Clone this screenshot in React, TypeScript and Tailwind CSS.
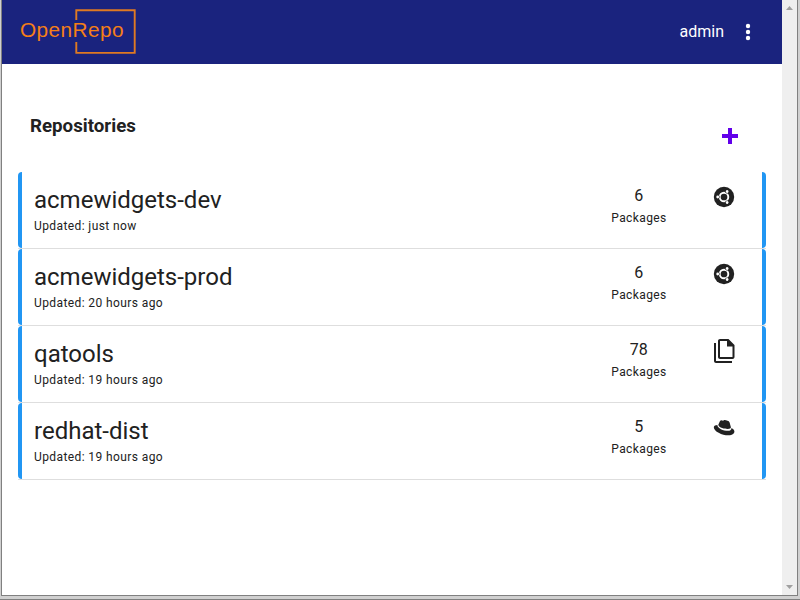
import React from "react";

type Kind = "deb" | "files" | "rpm";

const repos: { name: string; updated: string; count: number; kind: Kind }[] = [
  { name: "acmewidgets-dev", updated: "just now", count: 6, kind: "deb" },
  { name: "acmewidgets-prod", updated: "20 hours ago", count: 6, kind: "deb" },
  { name: "qatools", updated: "19 hours ago", count: 78, kind: "files" },
  { name: "redhat-dist", updated: "19 hours ago", count: 5, kind: "rpm" },
];

function Logo() {
  return (
    <svg width="118" height="46" viewBox="0 0 118 46" className="block">
      <path d="M57.300 12V2.300H115.700V44.900H57.300V34" fill="none" stroke="#e07a22" strokeWidth="1.900" />
      <text x="1" y="29" fontSize="20.800" textLength="103.500" fill="#f57f17" fontFamily="Liberation Sans, Arial, sans-serif">
        OpenRepo
      </text>
    </svg>
  );
}

function RepoIcon({ kind }: { kind: Kind }) {
  if (kind === "deb")
    return (
      <svg width="24" height="24" viewBox="0 0 24 24">
        <circle cx="12" cy="12" r="10.200" fill="currentColor" />
        <circle cx="12" cy="12" r="4.300" fill="none" stroke="#fff" strokeWidth="1.900" />
        {[60, 180, 300].map((angle) => (
          <g key={angle} transform={`rotate(${angle} 12 12)`}>
            <circle cx="18.200" cy="12" r="1.900" fill="currentColor" />
            <circle cx="18.300" cy="12" r="1.400" fill="#fff" />
          </g>
        ))}
      </svg>
    );
  if (kind === "files")
    return (
      <svg width="24" height="24" viewBox="0 0 24 24" fill="currentColor">
        <path d="M16 0H8C6.900 0 6 .9 6 2v16c0 1.100.9 2 2 2h12.500c1.100 0 2-.9 2-2V6l-6-6m4 18H8V2h7v5h5.500v11M4 4H2v18c0 1.100.9 2 2 2h16v-2H4V4z" />
        <path d="M15 1l6.500 6.500H15z" />
      </svg>
    );
  return (
    <svg width="24" height="24" viewBox="0 0 24 24" fill="currentColor">
      <path d="M15.800 13c1.800 0 3.200-.4 3.100-1.700L17.600 6.500c-.3-1.100-.8-1.500-2.700-2.100-1.200-.5-2.400-.7-3-.2l-.9.500c-.9-.4-2.200-.9-3 .3L6.300 8.800C6.500 11.200 11.400 13 15.800 13z" />
      <path d="M5.300 8.900C3.800 9 1.800 9.500 1.800 11.200c0 4.200 8.300 8.100 14.500 8.100 4.500 0 6.100-2 6.100-3.800 0-1.300-1.200-2.700-2.900-3.500-.1 2-1.500 2.800-3.500 2.800C11.200 14.800 5.500 12.200 5.300 8.900z" />
    </svg>
  );
}

export default function App() {
  return (
    <div className="flex h-[600px] w-[800px] flex-col overflow-hidden border-b border-[#808080] bg-[#d0d0d0] pb-[3px] pl-px pr-[2px] font-[Roboto,sans-serif] text-[#212121]">
      <div className="flex min-h-0 flex-1 border-x border-b border-[#808080] bg-white">
        <main className="flex min-w-0 flex-1 flex-col">
          <header className="flex h-16 items-start justify-between bg-[#1a237e] pl-[17px] pr-[22px] pt-2">
            <Logo />
            <div className="flex h-12 items-center text-white">
              <span className="mr-3 text-base">admin</span>
              <svg width="24" height="24" viewBox="0 0 24 24" fill="currentColor">
                <circle cx="12" cy="6" r="2.200" />
                <circle cx="12" cy="12" r="2.200" />
                <circle cx="12" cy="18" r="2.200" />
              </svg>
            </div>
          </header>
          <div className="flex h-[108px] items-start justify-between pl-7 pr-10 pt-12">
            <h1 className="text-[18.720px] font-bold leading-7">Repositories</h1>
            <svg width="24" height="24" viewBox="0 0 24 24" className="mt-3" fill="#6200ea">
              <path d="M20 14h-6v6h-4v-6H4v-4h6V4h4v6h6z" />
            </svg>
          </div>
          <section className="px-4">
            {repos.map((r) => (
              <article key={r.name} className="h-[77px] border-b border-[#dedede]">
                <div className="flex h-[76px] rounded-[4px] border-x-4 border-[#2196f3] pl-3 pr-[26px] pt-3">
                  <div className="flex-1">
                    <h2 className="text-2xl leading-8">{r.name}</h2>
                    <p className="text-xs leading-5 tracking-[0.4px]">Updated: {r.updated}</p>
                  </div>
                  <div className="mr-[33px] w-[80px] text-center">
                    <div className="pr-[0.6px] text-base leading-6">{r.count}</div>
                    <div className="text-xs leading-5 tracking-[0.4px]">Packages</div>
                  </div>
                  <div className="mt-px h-6 w-6">
                    <RepoIcon kind={r.kind} />
                  </div>
                </div>
              </article>
            ))}
          </section>
        </main>
        <aside className="flex w-[15px] flex-col items-center justify-between bg-[#efefef] py-[6px] text-[#a0a0a0]">
          <svg width="7" height="4" viewBox="0 0 7 4" fill="currentColor"><path d="M0 4L3.500 0L7 4z" /></svg>
          <svg width="7" height="4" viewBox="0 0 7 4" fill="currentColor"><path d="M0 0L3.500 4L7 0z" /></svg>
        </aside>
      </div>
    </div>
  );
}
